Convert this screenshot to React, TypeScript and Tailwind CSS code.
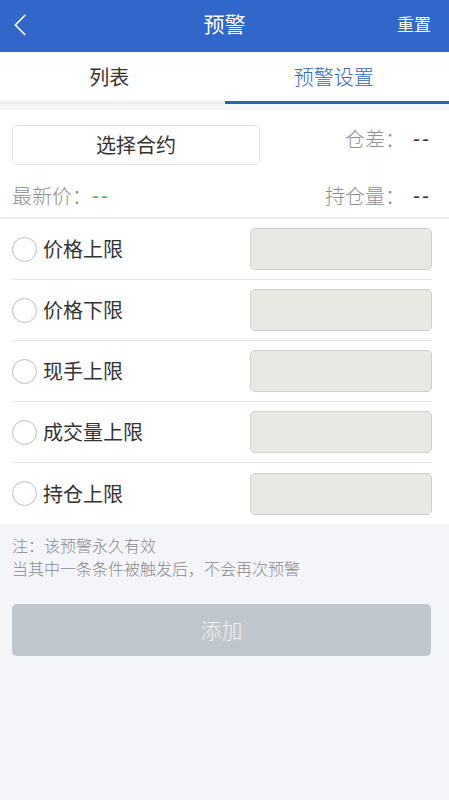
import { ChevronLeft } from "lucide-react";

const font = {
  fontFamily: '"Noto Sans CJK SC", "Noto Sans", sans-serif',
};

const dashFont = {
  fontFamily: '"Liberation Sans", sans-serif',
};

const limits = ["价格上限", "价格下限", "现手上限", "成交量上限", "持仓上限"];

const Dash = ({ green }: { green?: boolean }) => (
  <span
    className={`text-[21px] leading-[27px] tracking-[2px] ${
      green ? "text-[#3bb84a]" : "ml-[8px] text-[#333]"
    }`}
    style={dashFont}
  >
    --
  </span>
);

const LimitRow = ({ label, last }: { label: string; last: boolean }) => {
  return (
    <div className="pl-3 pr-[17px]">
      <div
        className={`flex h-[61px] items-center ${
          last ? "" : "border-b border-[#e6e6e6]"
        }`}
      >
        <span className="h-[25px] w-[25px] shrink-0 rounded-full border border-[#bdbdbd] bg-white" />
        <span className="ml-[6px] text-[20px] text-[#333]">{label}</span>
        <div className="ml-auto h-[42px] w-[182px] rounded-[5px] border border-[#cfcfcb] bg-[#e9e8e3]" />
      </div>
    </div>
  );
};

export default function App() {
  return (
    <div className="flex min-h-[800px] w-full flex-col bg-[#f4f5f8]" style={font}>
      {/* header */}
      <div className="relative flex h-[52px] items-center justify-center bg-[#3067c8] pb-[5px]">
        <ChevronLeft
          className="absolute left-[1px] top-[6px] h-[38px] w-[38px] text-white"
          strokeWidth={1.1}
        />
        <span className="text-[21px] text-white">预警</span>
        <span className="absolute right-[18px] text-[17px] text-white">重置</span>
      </div>

      {/* tabs */}
      <div className="flex h-[49px] bg-white">
        <div className="flex flex-1 items-center justify-center pr-[6px] text-[20px] text-[#333]">
          列表
        </div>
        <div className="flex flex-1 items-center justify-center pr-[6px] text-[20px] font-light text-[#3067c8]">
          预警设置
        </div>
      </div>
      <div className="flex h-[3px] bg-[#eeeff1]">
        <div className="flex-1" />
        <div className="flex-1 bg-[#2f5fb8]" />
      </div>
      <div className="h-[6px] bg-[#f4f5f8]" />

      {/* contract info */}
      <div className="bg-white pl-3 pr-[18px] pt-[15px]">
        <div className="flex items-start">
          <button className="flex h-[40px] w-[248px] items-center justify-center rounded-[5px] border border-[#e2e2e2] bg-white text-[20px] text-[#333]">
            选择合约
          </button>
          <div className="ml-auto flex items-center text-[20px] font-light leading-[27px] text-[#8f8f8f]">
            <span>仓差：</span>
            <Dash />
          </div>
        </div>
        <div className="flex items-center pb-[8px] pt-[17px] text-[20px] font-light leading-[27px] text-[#8f8f8f]">
          <span>最新价：</span>
          <Dash green />
          <span className="ml-auto">持仓量：</span>
          <Dash />
        </div>
      </div>
      <div className="h-[2px] bg-[#eeeff1]" />

      {/* limits */}
      <div className="bg-white">
        {limits.map((l, i) => (
          <LimitRow key={l} label={l} last={i === limits.length - 1} />
        ))}
      </div>

      {/* note */}
      <div className="px-3 pt-[10px] text-[16px] font-light leading-[23px] text-[#8a8a8a]">
        <p>注：该预警永久有效</p>
        <p>当其中一条条件被触发后，不会再次预警</p>
      </div>

      <div className="pl-3 pr-[18px] pt-[24px]">
        <button className="flex h-[52px] w-full items-center justify-center rounded-[5px] bg-[#c0c6cd] text-[21px] font-light text-[#eef0f3]">
          添加
        </button>
      </div>
    </div>
  );
}
